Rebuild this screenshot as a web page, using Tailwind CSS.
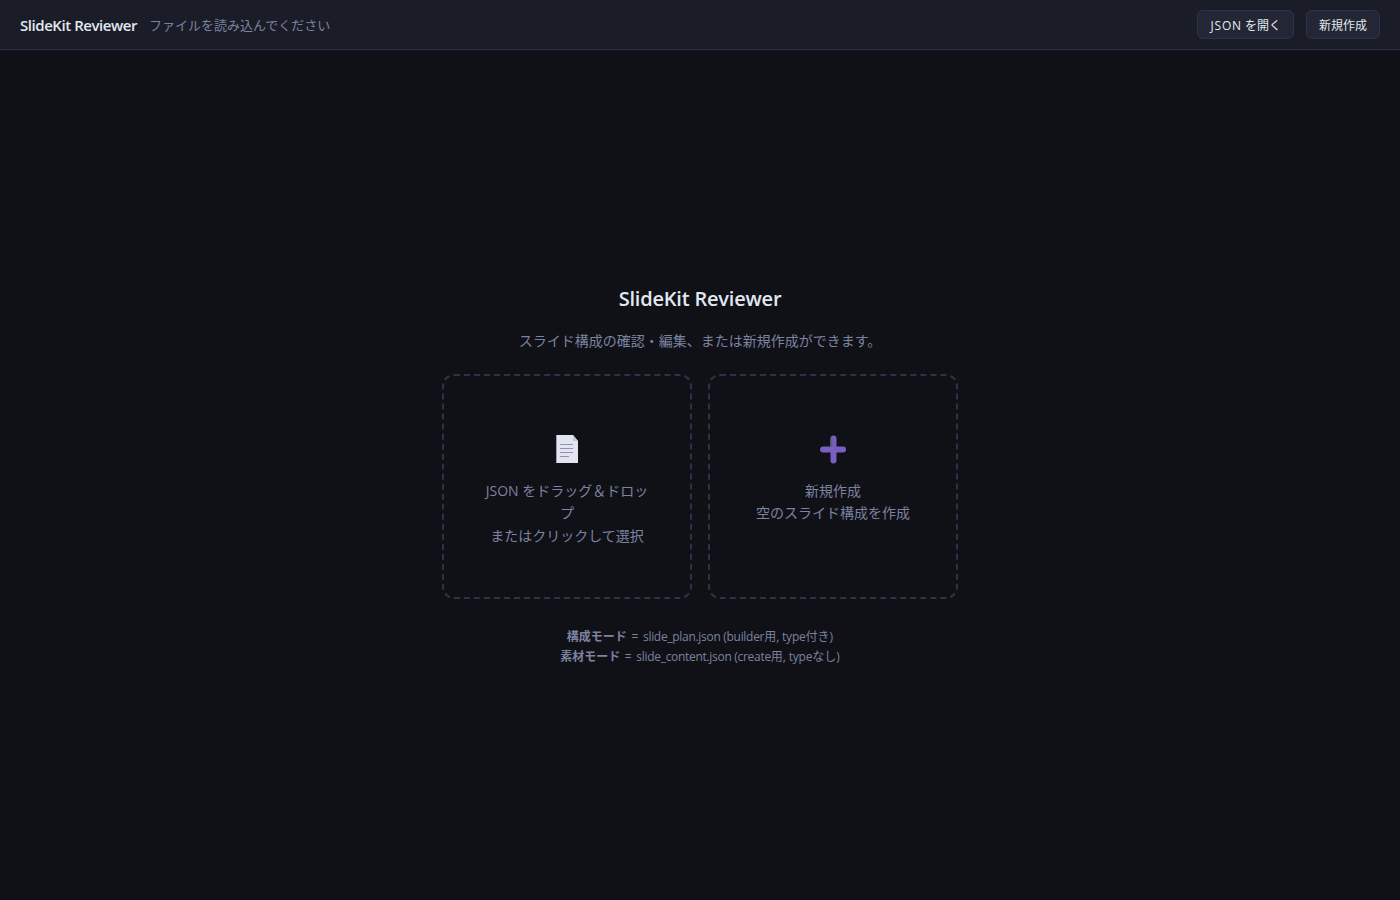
<!DOCTYPE html>
<html lang="ja">
<head>
  <meta charset="UTF-8" />
  <title>SlideKit Reviewer</title>
  <script src="https://cdn.jsdelivr.net/npm/@tailwindcss/browser@4"></script>
</head>
<body class="bg-[#0f1117] text-[#e2e8f0] font-['Open_Sans','Noto_Sans_CJK_JP',sans-serif] h-screen flex flex-col overflow-hidden">
  <!-- Header -->
  <header class="h-[50px] shrink-0 bg-[#1a1d27] border-b border-[#2e3148] px-5 flex items-center gap-3">
    <span class="pt-[2px] text-[15px] font-semibold tracking-[-0.45px] text-[#e2e8f0]">SlideKit Reviewer</span>
    <span class="pt-[2px] text-[13px] text-[#7c82a0]">ファイルを読み込んでください</span>
    <div class="ml-auto flex items-center gap-3">
      <button class="h-[29px] px-3 pt-[2px] text-xs text-[#e2e8f0] bg-[#232635] border border-[#2e3148] rounded-md"><span class="tracking-[0.8px] font-medium">JSON</span> を開く</button>
      <button class="h-[29px] px-3 pt-[2px] text-xs text-[#e2e8f0] bg-[#232635] border border-[#2e3148] rounded-md">新規作成</button>
    </div>
  </header>

  <!-- Welcome -->
  <main class="flex-1 flex flex-col items-center justify-center pt-[2px]">
    <h1 class="text-xl leading-[27px] font-semibold tracking-[-0.2px] mb-[18px]">SlideKit Reviewer</h1>
    <p class="text-sm leading-[22.4px] text-[#7c82a0] mb-[21px]">スライド構成の確認・編集、または新規作成ができます。</p>

    <div class="flex gap-4 mb-[28px]">
      <div class="w-[250px] h-[225px] border-2 border-dashed border-[#2e3148] rounded-xl px-10 pt-[58px] text-center text-sm leading-[22.4px] text-[#7c82a0]">
        <svg class="mx-auto mb-[14.300px]" width="32" height="32" viewBox="0 0 32 32">
          <path d="M5 1H22L27 7V29H5Z" fill="#e2e4f0"/>
          <path d="M5 1H6V29H5Z" fill="#9a9cc0"/>
          <path d="M22 1L27 7H22Z" fill="#b9cdd0"/>
          <path d="M9 10.5H22M9 14.5H22M9 18.5H22M9 22.5H18" stroke="#8f92b0" stroke-width="1"/>
        </svg>
        JSON をドラッグ＆ドロップ<br>またはクリックして選択
      </div>
      <div class="w-[250px] h-[225px] border-2 border-dashed border-[#2e3148] rounded-xl px-10 pt-[58px] text-center text-sm leading-[22.4px] text-[#7c82a0]">
        <svg class="mx-auto mb-[14.300px]" width="32" height="32" viewBox="0 0 32 32">
          <path d="M16.500 4.500V26.500M6 15.500H26" stroke="#7a5fc0" stroke-width="6" stroke-linecap="round"/>
          <path d="M14.500 4.500V12" stroke="#5a6484" stroke-width="2" stroke-linecap="round"/>
        </svg>
        新規作成<br>空のスライド構成を作成
      </div>
    </div>

    <p class="text-xs leading-5 text-[#7c82a0] text-center"><strong>構成モード</strong> <span class="mx-[1.5px]">=</span> <span class="tracking-[-0.3px]">slide_plan.json (builder</span>用<span class="tracking-[-0.2px]">, type</span>付き)<br><strong>素材モード</strong> <span class="mx-[1.5px]">=</span> <span class="tracking-[-0.3px]">slide_content.json (create</span>用<span class="tracking-[-0.2px]">, type</span>なし)</p>
  </main>
</body>
</html>
